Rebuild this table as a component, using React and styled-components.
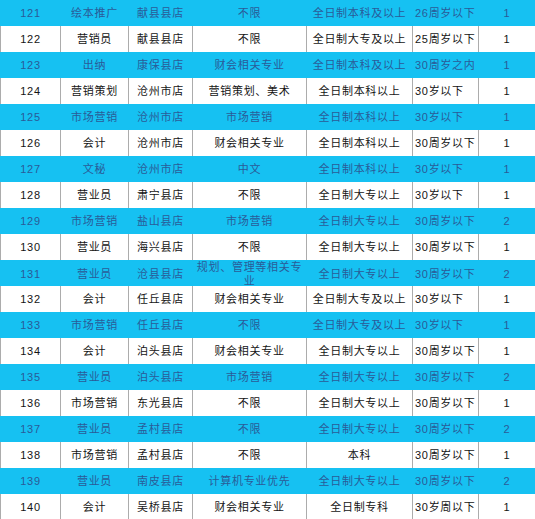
import styled, { createGlobalStyle } from 'styled-components';

const GlobalStyle = createGlobalStyle`
  html, body {
    margin: 0;
    padding: 0;
    background: #ffffff;
  }
  body {
    font-family: "Liberation Sans", "Noto Sans CJK SC", sans-serif;
  }
`;

const Table = styled.div`
  width: 535px;
  height: 519px;
  overflow: hidden;
  display: flex;
  flex-direction: column;
`;

const Row = styled.div`
  display: grid;
  grid-template-columns: 60px 68px 64px 114px 106px 66px 57px;
  height: 26px;
  flex-shrink: 0;
  background: ${(p) => (p.$blue ? '#16c1f2' : '#ffffff')};
  color: ${(p) => (p.$blue ? '#2a5b98' : '#141414')};
`;

const Cell = styled.div`
  display: flex;
  align-items: center;
  justify-content: ${(p) => (p.$left ? 'flex-start' : 'center')};
  box-sizing: border-box;
  padding: ${(p) => (p.$left ? '0 0 0 2px' : '0 2px')};
  border-left: 1px solid ${(p) => (p.$blue ? 'transparent' : '#acacac')};
  font-size: 11px;
  letter-spacing: 0.7px;
  line-height: 14px;
  text-align: center;
  white-space: ${(p) => (p.$wrap ? 'normal' : 'nowrap')};
  overflow: visible;
`;

const rows = [
  ['121', '绘本推广', '献县县店', '不限', '全日制本科及以上', '26周岁以下', '1'],
  ['122', '营销员', '献县县店', '不限', '全日制大专及以上', '25周岁以下', '1'],
  ['123', '出纳', '康保县店', '财会相关专业', '全日制本科及以上', '30周岁之内', '1'],
  ['124', '营销策划', '沧州市店', '营销策划、美术', '全日制本科以上', '30岁以下', '1'],
  ['125', '市场营销', '沧州市店', '市场营销', '全日制本科以上', '30岁以下', '1'],
  ['126', '会计', '沧州市店', '财会相关专业', '全日制本科以上', '30周岁以下', '1'],
  ['127', '文秘', '沧州市店', '中文', '全日制本科以上', '30岁以下', '1'],
  ['128', '营业员', '肃宁县店', '不限', '全日制大专以上', '30岁以下', '1'],
  ['129', '市场营销', '盐山县店', '市场营销', '全日制大专以上', '30周岁以下', '2'],
  ['130', '营业员', '海兴县店', '不限', '全日制大专以上', '30周岁以下', '1'],
  ['131', '营业员', '沧县县店', '规划、管理等相关专业', '全日制大专以上', '30周岁以下', '2'],
  ['132', '会计', '任丘县店', '财会相关专业', '全日制大专及以上', '30岁以下', '1'],
  ['133', '市场营销', '任丘县店', '不限', '全日制大专及以上', '30岁以下', '1'],
  ['134', '会计', '泊头县店', '财会相关专业', '全日制大专以上', '30周岁以下', '1'],
  ['135', '营业员', '泊头县店', '市场营销', '全日制大专以上', '30周岁以下', '2'],
  ['136', '市场营销', '东光县店', '不限', '全日制大专以上', '30周岁以下', '1'],
  ['137', '营业员', '孟村县店', '不限', '全日制大专以上', '30周岁以下', '2'],
  ['138', '市场营销', '孟村县店', '不限', '本科', '30周岁以下', '1'],
  ['139', '营业员', '南皮县店', '计算机专业优先', '全日制大专以上', '30周岁以下', '2'],
  ['140', '会计', '吴桥县店', '财会相关专业', '全日制专科', '30岁周以下', '1'],
];

export default function App() {
  return (
    <>
      <GlobalStyle />
      <Table>
        {rows.map((r, i) => {
          const blue = i % 2 === 0;
          return (
            <Row key={r[0]} $blue={blue}>
              {r.map((c, j) => (
                <Cell key={j} $blue={blue} $left={j === 5} $wrap={j === 3}>
                  {c}
                </Cell>
              ))}
            </Row>
          );
        })}
      </Table>
    </>
  );
}
